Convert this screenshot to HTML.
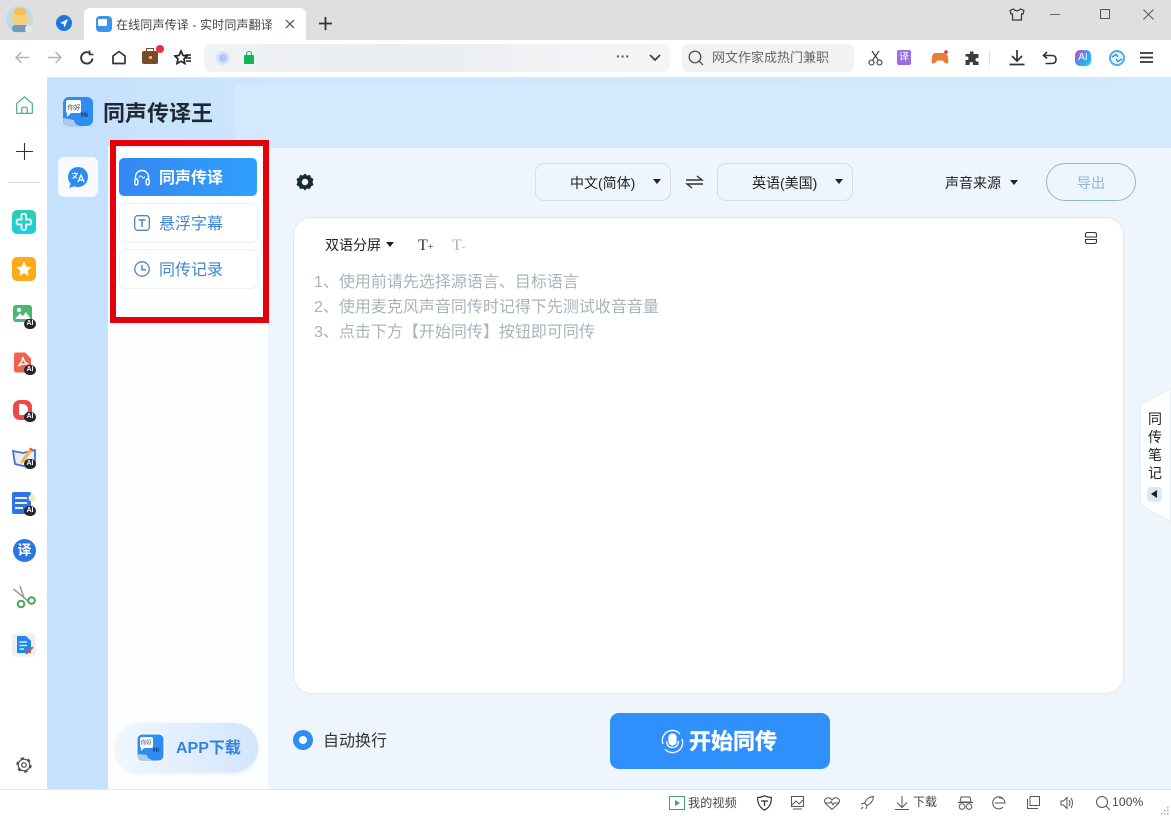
<!DOCTYPE html>
<html lang="zh"><head><meta charset="utf-8"><title>在线同声传译</title>
<style>
*{box-sizing:border-box;margin:0;padding:0}
html,body{width:1171px;height:816px;overflow:hidden;background:#fff}
body{position:relative;font-family:"Liberation Sans","Noto Sans CJK SC",sans-serif;color:#222}
.a{position:absolute}
.t{position:absolute;white-space:nowrap;line-height:1}
svg{position:absolute;overflow:visible}
.ai{position:absolute;width:12px;height:10px;border-radius:6px;background:#26262c;color:#fff;font-size:7px;font-weight:bold;line-height:10px;text-align:center}
.tri{position:absolute;width:0;height:0;border-left:4px solid transparent;border-right:4px solid transparent;border-top:5px solid #222}
.sel{position:absolute;top:163px;width:136px;height:38px;border:1px solid #d3deea;border-radius:9px;background:#eef5fd}
</style></head><body>

<!-- title bar -->
<div class="a" style="left:0;top:0;width:1171px;height:40px;background:#dfdfdf"></div>
<div class="a" style="left:6px;top:6px;width:27px;height:27px;border-radius:50%;background:#bcdcec"></div>
<div class="a" style="left:11px;top:12px;width:18px;height:13px;border-radius:8px;background:#f3cf7c"></div>
<div class="a" style="left:14px;top:8px;width:12px;height:7px;border-radius:6px;background:#f0bf55"></div>
<div class="a" style="left:12px;top:25px;width:16px;height:7px;border-radius:3px;background:#6f9cc0"></div>
<div class="a" style="left:25px;top:25px;width:8px;height:8px;border-radius:50%;background:#e8e8e8"></div>
<div class="a" style="left:56px;top:15px;width:16px;height:16px;border-radius:50%;background:#1f74e0"></div>
<svg style="left:56px;top:15px" width="16" height="16"><path d="M12 4 L4 8 L7.500 9 L8.500 12.500Z" fill="#fff"/></svg>
<div class="a" style="left:84px;top:8px;width:222px;height:32px;background:#fff;border-radius:6px 6px 0 0"></div>
<div class="a" style="left:96px;top:16px;width:16px;height:16px;border-radius:4px;background:#3b93f0"></div>
<div class="a" style="left:98px;top:19px;width:9px;height:7px;border-radius:1px;background:#fff"></div>
<div class="t" style="left:116px;top:18px;width:158px;overflow:hidden;font-size:12px;letter-spacing:.15px;line-height:15px;color:#444">在线同声传译 - 实时同声翻译</div>
<svg style="left:285px;top:19px" width="10" height="10"><path d="M1 1L9 9M9 1L1 9" stroke="#444" stroke-width="1.200"/></svg>
<svg style="left:319px;top:17px" width="13" height="13"><path d="M6.500 0V13M0 6.500H13" stroke="#333" stroke-width="1.800"/></svg>
<svg style="left:1009px;top:8px" width="16" height="13" fill="none" stroke="#333" stroke-width="1.200"><path d="M4.500 1 L1 2.500 L2 6 H3.500 V12 H12.500 V6 H14 L15 2.500 L11.500 1 Q8 4.500 4.500 1Z"/></svg>
<div class="a" style="left:1050px;top:14px;width:10px;height:1px;background:#666"></div>
<div class="a" style="left:1100px;top:9px;width:10px;height:10px;border:1px solid #555"></div>
<svg style="left:1143px;top:9px" width="11" height="11"><path d="M0.500 0.500L10.500 10.500M10.500 0.500L0.500 10.500" stroke="#555"/></svg>

<!-- toolbar -->
<svg style="left:15px;top:51px" width="14" height="13" fill="none" stroke="#b4b4b4" stroke-width="1.500"><path d="M14 6.500H1M6.500 1L1 6.500L6.500 12"/></svg>
<svg style="left:48px;top:51px" width="14" height="13" fill="none" stroke="#b4b4b4" stroke-width="1.500"><path d="M0 6.500H13M7.500 1L13 6.500L7.500 12"/></svg>
<svg style="left:80px;top:50px" width="14" height="15" fill="none" stroke="#333" stroke-width="1.900"><path d="M12.500 8.500A5.700 5.700 0 1 1 10.500 3.500"/><path d="M9.500 0.500V4.500H13.500" stroke-width="1.500"/></svg>
<svg style="left:112px;top:50px" width="14" height="15" fill="none" stroke="#333" stroke-width="1.700"><path d="M1 6L7 1.500L13 6V13.500H1Z" stroke-linejoin="round"/></svg>
<div class="a" style="left:142px;top:51px;width:16px;height:13px;border-radius:2px;background:#7a4a2a"></div>
<div class="a" style="left:146px;top:48px;width:8px;height:4px;border:1px solid #7a4a2a;border-bottom:0"></div>
<div class="a" style="left:149px;top:56px;width:3px;height:3px;background:#e8b060"></div>
<div class="a" style="left:156px;top:45px;width:8px;height:8px;border-radius:50%;background:#e93040"></div>
<svg style="left:174px;top:50px" width="17" height="15"><path d="M7 1L9 5.500L13 6L10 9L10.800 13.500L7 11.300L3 13.500L4 9L1 6L5 5.500Z" fill="none" stroke="#222" stroke-width="1.700"/><path d="M11 5H17M12 8H17M12 11H17" stroke="#222" stroke-width="1.500"/></svg>
<div class="a" style="left:204px;top:44px;width:466px;height:28px;border-radius:6px;background:linear-gradient(90deg,#f1f3f5,#e9edf0 40%,#f3f4f6 85%,#f4f5f6)"></div>
<div class="a" style="left:216px;top:51px;width:14px;height:14px;border-radius:50%;background:#d6e4fb"></div>
<div class="a" style="left:219px;top:54px;width:8px;height:8px;border-radius:50%;background:#a9c8f5"></div>
<div class="a" style="left:244px;top:55px;width:10px;height:9px;border-radius:1px;background:#15b358"></div>
<div class="a" style="left:246px;top:51px;width:6px;height:6px;border:1.300px solid #15b358;border-bottom:0;border-radius:3px 3px 0 0"></div>
<div class="t" style="left:616px;top:49px;font-size:14px;font-weight:bold;color:#555">···</div>
<svg style="left:649px;top:54px" width="12" height="8" fill="none" stroke="#444" stroke-width="1.800"><path d="M1 1L6 6L11 1"/></svg>
<div class="a" style="left:682px;top:44px;width:172px;height:28px;border-radius:6px;background:#f1f2f4"></div>
<svg style="left:688px;top:50px" width="16" height="16" fill="none" stroke="#444" stroke-width="1.200"><circle cx="7" cy="7" r="5.800"/><path d="M11 11L15 15"/></svg>
<div class="t" style="left:712px;top:51px;font-size:13px;color:#666">网文作家成热门兼职</div>
<svg style="left:868px;top:50px" width="15" height="16" fill="none" stroke="#333" stroke-width="1.100"><circle cx="3.500" cy="12.500" r="2.500"/><circle cx="11.500" cy="12.500" r="2.500"/><path d="M4.500 10.300L11 1M10.500 10.300L4 1"/></svg>
<div class="a" style="left:897px;top:50px;width:14px;height:15px;border-radius:2px;background:#9b6de0;color:#fff;font-size:10px;line-height:15px;text-align:center">译</div>
<svg style="left:931px;top:50px" width="18" height="15"><path d="M4 3H13Q16.500 3 17 8L17.500 12Q17 14.500 14 13L11.500 10.500H6.500L4 13Q1 14.500 0.500 12L1 8Q1.500 3 4 3Z" fill="#ee7a36"/><circle cx="15" cy="2" r="1.800" fill="#e93040"/></svg>
<svg style="left:964px;top:50px" width="16" height="16"><path d="M6 1.500H9.500V4H14.500V8H12.500A2 2 0 0 0 12.500 11.500H14.500V15H9V13A2 2 0 0 0 5.500 13V15H1.500V10H3.500A2 2 0 0 0 3.500 6.500H1.500V4H6Z" fill="#3c3c3c"/></svg>
<div class="a" style="left:989px;top:50px;width:1px;height:16px;background:#e2e2e2"></div>
<svg style="left:1009px;top:50px" width="16" height="16" fill="none" stroke="#333" stroke-width="1.700"><path d="M8 0V10M3 6L8 11L13 6M0.500 14.500H15.500"/></svg>
<svg style="left:1042px;top:51px" width="15" height="14" fill="none" stroke="#333" stroke-width="1.600"><path d="M5 1L1.500 4.500L5 7.500M1.500 4.500H10Q14 4.500 14 8.500Q14 12.500 10 12.500H3.500"/></svg>
<div class="a" style="left:1075px;top:50px;width:16px;height:16px;border-radius:5px;background:linear-gradient(135deg,#d245d6,#2ea5f0 60%,#25cfe0);color:#fff;font-size:10px;line-height:16px;text-align:center">AI</div>
<div class="a" style="left:1109px;top:50px;width:16px;height:16px;border-radius:50%;border:2px solid #4eaee8;background:#e7f4fb"></div>
<svg style="left:1112px;top:54px" width="10" height="8" fill="none" stroke="#2c7bd0" stroke-width="1.300"><path d="M0 3L4 0.500L6 3M10 5L6 7.500L4 5"/></svg>
<svg style="left:1140px;top:51px" width="13" height="13"><path d="M0 2H13M0 6.500H13M0 11H13" stroke="#333" stroke-width="1.700"/></svg>

<!-- left sidebar -->
<div class="a" style="left:47px;top:78px;width:1124px;height:70px;background:linear-gradient(90deg,#c6e1fd 0,#cde5fd 20%,#d3e9fd 100%)"></div>
<div class="a" style="left:235px;top:85px;width:936px;height:63px;background:#d4e9fd"></div>
<div class="a" style="left:47px;top:78px;width:61px;height:711px;background:#c5e1fd"></div>
<div class="a" style="left:47px;top:77px;width:1124px;height:1px;background:#d8ebfb"></div>
<svg style="left:16px;top:96px" width="17" height="18" fill="none" stroke="#3ba877" stroke-width="1.100"><path d="M0.700 7.500L8.500 0.800L16.300 7.500V17.300H0.700Z" stroke-linejoin="round"/><path d="M5.800 17V13Q5.800 11 8.500 11T11.200 13V17"/></svg>
<svg style="left:16px;top:143px" width="17" height="17"><path d="M8.500 0V17M0 8.500H17" stroke="#333" stroke-width="1.100"/></svg>
<div class="a" style="left:8px;top:182px;width:32px;height:1px;background:#dcdcdc"></div>
<div class="a" style="left:12px;top:210px;width:24px;height:24px;border-radius:5px;background:linear-gradient(#2bcfae,#1dcfe0)"></div>
<svg style="left:12px;top:210px" width="24" height="24" fill="none" stroke="#fff"><path d="M9.500 4.500Q12 3 14 4.500V9.500H18Q20.500 12 18.500 14.500H14V19Q12 21 9.500 19V14.500H5.500Q3.500 12 5.500 9.500H9.500Z" stroke-width="1.700"/></svg>
<div class="a" style="left:12px;top:257px;width:24px;height:24px;border-radius:5px;background:#fbab1a"></div>
<svg style="left:12px;top:257px" width="24" height="24"><path d="M12 4.500L14.300 9.500L19.500 10.100L15.700 13.600L16.700 18.800L12 16.200L7.300 18.800L8.300 13.600L4.500 10.100L9.700 9.500Z" fill="#fff"/></svg>
<div class="a" style="left:13px;top:305px;width:19px;height:17px;border-radius:3px;background:#47b871"></div>
<svg style="left:13px;top:305px" width="19" height="17"><circle cx="6" cy="5" r="2.200" fill="#fff"/><path d="M2 14L7 8.500L10 11L13 7L17 13V14Z" fill="#fff"/></svg>
<div class="ai" style="left:24px;top:319px">AI</div>
<svg style="left:14px;top:352px" width="18" height="21"><path d="M2 0.500H11L17 6.500V18Q17 20.500 14.500 20.500H2.500Q0 20.500 0 18V3Q0 0.500 2 0.500Z" fill="#f1624c"/><path d="M4 14Q8 11 9 5Q10 11 14 12Q8 11.500 4 14Z" fill="none" stroke="#fff" stroke-width="1.400"/></svg>
<div class="ai" style="left:24px;top:365px">AI</div>
<div class="a" style="left:13px;top:400px;width:19px;height:20px;border-radius:7px;background:#ef4743"></div>
<svg style="left:13px;top:400px" width="19" height="20"><path d="M6 4H9.500A5.500 5.500 0 0 1 9.500 15H6Z" fill="#fff"/></svg>
<div class="ai" style="left:24px;top:412px">AI</div>
<svg style="left:12px;top:447px" width="24" height="22"><path d="M1 4L11 6L23 3V17L11 19L3 17Z" fill="#e7effb" stroke="#4a70cf" stroke-width="1.800"/><path d="M9 14L17 2L20 4L12 15L8.500 16.500Z" fill="#f4b34c"/><path d="M17 2L20 4L21 2L18.500 0.500Z" fill="#e8584a"/></svg>
<div class="ai" style="left:24px;top:459px">AI</div>
<div class="a" style="left:12px;top:492px;width:19px;height:22px;border-radius:2px;background:#2d74e8"></div>
<svg style="left:12px;top:492px" width="24" height="22"><path d="M3 6H15M3 11H15M3 16H11" stroke="#fff" stroke-width="1.800"/><circle cx="20" cy="6" r="3.500" fill="#fbe9b8"/></svg>
<div class="ai" style="left:24px;top:506px">AI</div>
<div class="a" style="left:13px;top:539px;width:23px;height:23px;border-radius:50%;background:#2a74e4;color:#fff;font-size:14px;font-weight:bold;line-height:23px;text-align:center">译</div>
<svg style="left:13px;top:586px" width="23" height="23" fill="none"><path d="M0.500 3L15 15M7 0L11.500 13" stroke="#999" stroke-width="1.500"/><circle cx="8" cy="18" r="3.300" stroke="#45a553" stroke-width="2"/><circle cx="18.500" cy="14.500" r="3.300" stroke="#45a553" stroke-width="2"/></svg>
<div class="a" style="left:12px;top:633px;width:24px;height:24px;border-radius:5px;background:#f0f0f0"></div>
<svg style="left:12px;top:633px" width="24" height="24"><path d="M5 3H14L19 8V20H5Z" fill="#1e87f0"/><path d="M7.500 9H15M7.500 12.500H15M7.500 16H12" stroke="#fff" stroke-width="1.300"/><path d="M14 21L21 14" stroke="#d9583c" stroke-width="2"/></svg>
<svg style="left:16px;top:757px" width="16" height="16" fill="none" stroke="#4a4a4a"><circle cx="8" cy="8" r="5.800" stroke-width="1.200"/><circle cx="8" cy="8" r="7" stroke-width="1.400" stroke-dasharray="3.400 3.930"/><circle cx="8" cy="8" r="2.300" stroke-width="1.200"/></svg>

<!-- app header -->
<svg style="left:62px;top:96px" width="32" height="32"><rect x="1" y="1" width="30" height="29" rx="6" fill="#2f8cf0"/><path d="M1 22Q1 30 8 31H24Q12 30 12 24Z" fill="#a9cbec"/><rect x="4" y="4" width="15" height="13" rx="2" fill="#fff"/><path d="M5 16V21L10 16Z" fill="#fff"/><text x="5.500" y="13.500" font-size="6.500" fill="#444" font-family="Liberation Sans,Noto Sans CJK SC,sans-serif">你好</text><text x="19" y="21" font-size="7" font-weight="bold" fill="#123a70" font-family="Liberation Sans,sans-serif">Hi</text></svg>
<div class="t" style="left:103px;top:101px;font-size:22px;font-weight:bold;line-height:26px;color:#1d2833">同声传译王</div>

<!-- column icon -->
<div class="a" style="left:58px;top:157px;width:40px;height:40px;border-radius:6px;background:#f7fafe"></div>
<div class="a" style="left:68px;top:167px;width:20px;height:20px;border-radius:50%;background:#2d8cf0"></div>
<svg style="left:68px;top:167px" width="20" height="22"><path d="M3 16L1 21L7 19Z" fill="#2d8cf0"/><path d="M4 6.500H10M7 5V6.500M9 6.500Q8 10 4.500 11.500M5.500 8.500Q7 10.500 9 11" stroke="#fff" stroke-width="1" fill="none"/><path d="M10 15L13 8L16 15M11 13H15" stroke="#fff" stroke-width="1.300" fill="none"/></svg>

<!-- nav -->
<div class="a" style="left:108px;top:147px;width:160px;height:642px;background:#fdfeff"></div>
<div class="a" style="left:119px;top:158px;width:138px;height:38px;border-radius:5px;background:linear-gradient(90deg,#3488f2,#30a0fb)"></div>
<svg style="left:134px;top:169px" width="16" height="17" fill="none" stroke="#fff" stroke-width="1.400"><path d="M1.500 11V8A6.500 6.500 0 0 1 14.500 8V11"/><rect x="0.800" y="10" width="3" height="6" rx="1.500"/><rect x="12.200" y="10" width="3" height="6" rx="1.500"/><path d="M5 8.500Q6.500 5.500 8 8T11 7.500" stroke-width="1"/></svg>
<div class="t" style="left:159px;top:171px;font-size:16px;font-weight:bold;color:#fff">同声传译</div>
<div class="a" style="left:119px;top:203px;width:139px;height:40px;border-radius:7px;border:1px solid #edf1f6;background:#fff"></div>
<svg style="left:134px;top:215px" width="16" height="16" fill="none" stroke="#4f86c6" stroke-width="1.300"><rect x="0.700" y="0.700" width="14.600" height="14.600" rx="3"/><path d="M4.500 5H11.500M8 5V12" stroke-width="1.500"/></svg>
<div class="t" style="left:159px;top:217px;font-size:16px;color:#3f86cc">悬浮字幕</div>
<div class="a" style="left:119px;top:249px;width:139px;height:40px;border-radius:7px;border:1px solid #edf1f6;background:#fff"></div>
<svg style="left:134px;top:261px" width="16" height="16" fill="none" stroke="#4f86c6" stroke-width="1.300"><circle cx="8" cy="8" r="7.200"/><path d="M8 4V8.700H12" stroke-width="1.500"/></svg>
<div class="t" style="left:159px;top:263px;font-size:16px;color:#3f86cc">同传记录</div>

<!-- APP pill -->
<div class="a" style="left:116px;top:723px;width:142px;height:49px;border-radius:25px;background:linear-gradient(90deg,#f0f7fe,#d3e5fb);box-shadow:0 1px 4px rgba(120,170,230,.25)"></div>
<svg style="left:136px;top:733px" width="29" height="29"><rect x="1" y="1" width="27" height="27" rx="5" fill="#2f8cf0" stroke="#fff"/><path d="M1 21Q1 28 7 28H22Q11 27 11 22Z" fill="#a9cbec"/><rect x="4" y="4" width="13" height="11" rx="2" fill="#fff"/><path d="M5 14V18L9 14Z" fill="#fff"/><text x="4.800" y="11.500" font-size="5.500" fill="#444" font-family="Liberation Sans,Noto Sans CJK SC,sans-serif">你好</text><text x="17" y="19" font-size="6" font-weight="bold" fill="#123a70" font-family="Liberation Sans,sans-serif">Hi</text></svg>
<div class="t" style="left:176px;top:741px;font-size:16px;font-weight:bold;color:#2d84dd">APP下载</div>

<!-- main -->
<div class="a" style="left:268px;top:148px;width:903px;height:641px;background:#eef5fd"></div>
<svg style="left:296px;top:173px" width="18" height="18"><path d="M9 0.500L11 2.500L14 2L15 4.500L17.500 6L16.500 9L17.500 12L15 13.500L14 16L11 15.500L9 17.500L7 15.500L4 16L3 13.500L0.500 12L1.500 9L0.500 6L3 4.500L4 2L7 2.500Z" fill="#1c2a36"/><circle cx="9" cy="9" r="3.200" fill="#eef5fd"/></svg>
<div class="sel" style="left:535px"></div>
<div class="t" style="left:570px;top:176px;font-size:14px;color:#222">中文(简体)</div>
<div class="tri" style="left:653px;top:179px"></div>
<svg style="left:686px;top:175px" width="17" height="14" fill="none" stroke="#333" stroke-width="1.400"><path d="M0 5H16L11 1M17 9H1L6 13"/></svg>
<div class="sel" style="left:717px"></div>
<div class="t" style="left:752px;top:176px;font-size:14px;color:#222">英语(美国)</div>
<div class="tri" style="left:835px;top:179px"></div>
<div class="t" style="left:945px;top:176px;font-size:14px;color:#222">声音来源</div>
<div class="tri" style="left:1010px;top:180px"></div>
<div class="a" style="left:1046px;top:163px;width:90px;height:38px;border-radius:19px;border:1px solid #8fb8d8"></div>
<div class="t" style="left:1077px;top:176px;font-size:14px;color:#86b8e4">导出</div>

<!-- panel -->
<div class="a" style="left:293px;top:217px;width:831px;height:477px;border:1px solid #e0e7f0;border-radius:18px;background:#fff"></div>
<div class="t" style="left:325px;top:238px;font-size:14px;color:#222">双语分屏</div>
<div class="tri" style="left:386px;top:242px"></div>
<div class="t" style="left:418px;top:238px;font-size:16px;font-family:'Liberation Serif',serif;color:#333">T<span style="font-size:10px">+</span></div>
<div class="t" style="left:452px;top:238px;font-size:16px;font-family:'Liberation Serif',serif;color:#aab2ba">T<span style="font-size:10px">-</span></div>
<svg style="left:1084px;top:231px" width="14" height="14" fill="none" stroke="#333" stroke-width="1.100"><path d="M1.500 6V3.500Q1.500 1.500 3.500 1.500H10.500Q12.500 1.500 12.500 3.500V6ZM1.500 8.500V10.500Q1.500 12.500 3.500 12.500H10.500Q12.500 12.500 12.500 10.500V8.500Z"/></svg>
<div class="t" style="left:314px;top:275px;font-size:16px;color:#a9b3bc">1、使用前请先选择源语言、目标语言</div>
<div class="t" style="left:314px;top:300px;font-size:16px;color:#a9b3bc">2、使用麦克风声音同传时记得下先测试收音音量</div>
<div class="t" style="left:314px;top:325px;font-size:16px;color:#a9b3bc">3、点击下方【开始同传】按钮即可同传</div>

<!-- side tab -->
<svg style="left:1139px;top:388px" width="32" height="134"><path d="M32 0L10 12Q1 16 1 22V112Q1 118 10 122L32 134Z" fill="#fdfeff" stroke="#e4ebf3"/></svg>
<div class="t" style="left:1148px;top:410px;font-size:14px;width:15px;line-height:18px;white-space:normal;color:#222">同传笔记</div>
<div class="a" style="left:1147px;top:487px;width:15px;height:15px;border-radius:4px;background:#dde8f3"></div>
<div class="a" style="left:1151px;top:490px;width:0;height:0;border-top:4.500px solid transparent;border-bottom:4.500px solid transparent;border-right:6px solid #1a2028"></div>

<!-- bottom -->
<div class="a" style="left:293px;top:730px;width:20px;height:20px;border-radius:50%;background:#2f8ff0"></div>
<div class="a" style="left:299px;top:736px;width:8px;height:8px;border-radius:50%;background:#fff"></div>
<div class="t" style="left:323px;top:734px;font-size:16px;color:#333">自动换行</div>
<div class="a" style="left:610px;top:713px;width:220px;height:56px;border-radius:9px;background:#2f90fb"></div>
<svg style="left:661px;top:730px" width="23" height="23" fill="none" stroke="#fff" stroke-width="1.300"><path d="M2 14A10 10 0 0 1 19 4M21 9A10 10 0 0 1 4 19"/><rect x="8" y="4" width="7" height="11" rx="3.500" fill="#fff"/><path d="M5.500 11Q6 17.500 11.500 17.500T17.500 11"/></svg>
<div class="t" style="left:689px;top:729px;font-size:22px;font-weight:bold;line-height:25px;color:#fff;-webkit-text-stroke:.4px #fff">开始同传</div>

<!-- red rectangle -->
<div class="a" style="left:110px;top:140px;width:159px;height:183px;border:6px solid #e5000a"></div>

<!-- status bar -->
<div class="a" style="left:0;top:789px;width:1171px;height:1px;background:#e4e6e8"></div>
<div class="a" style="left:669px;top:796px;width:16px;height:14px;border:1px solid #3fa56b"></div>
<div class="a" style="left:675px;top:800px;width:0;height:0;border-top:3px solid transparent;border-bottom:3px solid transparent;border-left:5px solid #3fa56b"></div>
<div class="t" style="left:688px;top:797px;font-size:12px;letter-spacing:.2px;color:#444">我的视频</div>
<svg style="left:757px;top:795px" width="15" height="16" fill="none" stroke="#333" stroke-width="1.200"><path d="M7.500 0.800Q11 2.500 14.300 2.500Q15 11 7.500 15.200Q0 11 0.700 2.500Q4 2.500 7.500 0.800Z"/><path d="M4 6H11M7.500 6V11"/></svg>
<svg style="left:791px;top:796px" width="13" height="14" fill="none" stroke="#555"><rect x="0.500" y="0.500" width="12" height="10"/><path d="M1 9L5 5L8 8L12 4M2 13H11"/></svg>
<svg style="left:824px;top:797px" width="16" height="13" fill="none" stroke="#555"><path d="M8 12.500L1.500 6.500Q-1 2.500 3 1Q6 0 8 3Q10 0 13 1Q17 2.500 14.500 6.500Z"/><path d="M1 6H6L7 4.500L9 8L10 6H15"/></svg>
<svg style="left:860px;top:796px" width="14" height="14" fill="none" stroke="#555"><path d="M13.500 0.500Q7 1 4.500 7L7 9.500Q13 7 13.500 0.500ZM4.500 7L1 8M7 9.500L6 13M3 11L1 13"/></svg>
<svg style="left:895px;top:796px" width="14" height="14" fill="none" stroke="#555"><path d="M7 0V11M2 6.500L7 11.500L12 6.500M0 13.500H14"/></svg>
<div class="t" style="left:913px;top:796px;font-size:12px;color:#444">下载</div>
<svg style="left:958px;top:796px" width="15" height="14" fill="none" stroke="#555"><path d="M3 1H12L13 6H2ZM0 6.500H15"/><circle cx="4" cy="10.500" r="2.800"/><circle cx="11" cy="10.500" r="2.800"/></svg>
<svg style="left:992px;top:796px" width="14" height="14" fill="none" stroke="#555"><path d="M12 4A6 6 0 1 0 11 11M3 7H13Q12 1 7 2"/></svg>
<svg style="left:1027px;top:796px" width="13" height="14" fill="none" stroke="#555"><path d="M3 0.500H12.500V9.500H3V0.500M0.500 3V12.500H11"/></svg>
<svg style="left:1060px;top:796px" width="14" height="14" fill="none" stroke="#555"><path d="M1 5H3.500L7 1.500V12.500L3.500 9H1Z"/><path d="M9 4Q11 7 9 10M11 2Q14 7 11 12"/></svg>
<svg style="left:1096px;top:796px" width="14" height="14" fill="none" stroke="#555"><circle cx="6" cy="6" r="5.500"/><path d="M10 10L14 14"/></svg>
<div class="t" style="left:1112px;top:796px;font-size:12px;letter-spacing:.2px;color:#444">100%</div>
<svg style="left:1160px;top:806px" width="10" height="10" fill="#aaa"><rect x="7" y="1" width="1.500" height="1.500"/><rect x="4" y="4" width="1.500" height="1.500"/><rect x="7" y="4" width="1.500" height="1.500"/><rect x="1" y="7" width="1.500" height="1.500"/><rect x="4" y="7" width="1.500" height="1.500"/><rect x="7" y="7" width="1.500" height="1.500"/></svg>
</body></html>
